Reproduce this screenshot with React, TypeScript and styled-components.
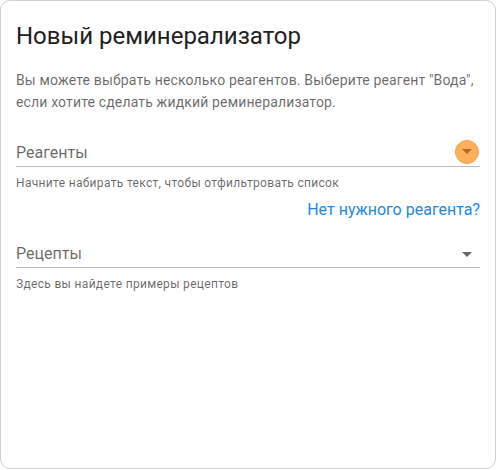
import styled, { createGlobalStyle } from "styled-components";

const GlobalStyle = createGlobalStyle`
  body {
    margin: 0;
    background: #fff;
    font-family: Roboto, "Noto Sans", Arial, sans-serif;
  }
`;

const Card = styled.div`
  box-sizing: border-box;
  width: 496px;
  height: 469px;
  border: 1px solid #cfcfcf;
  border-radius: 10px;
  padding: 21px 15px 16px;
  display: flex;
  flex-direction: column;
`;

const Title = styled.h2`
  margin: 0;
  font-size: 24px;
  font-weight: 400;
  line-height: 28px;
  color: #212121;
`;

const Intro = styled.p`
  margin: 19px 0 0;
  font-size: 14px;
  line-height: 22px;
  letter-spacing: 0.15px;
  color: rgba(0, 0, 0, 0.6);
`;

const Field = styled.div<{ $gap: number }>`
  margin-top: ${(p) => p.$gap}px;
  display: flex;
  flex-direction: column;
`;

const InputRow = styled.div`
  display: flex;
  align-items: center;
  justify-content: space-between;
  height: 24px;
  padding-bottom: 1px;
  border-bottom: 1px solid #bdbdbd;
`;

const Label = styled.span`
  font-size: 16px;
  line-height: 24px;
  color: rgba(0, 0, 0, 0.6);
`;

const ArrowButton = styled.span<{ $active?: boolean }>`
  box-sizing: border-box;
  width: 24px;
  height: 24px;
  margin-right: 1px;
  margin-top: ${(p) => (p.$active ? "-3px" : "0")};
  border-radius: 50%;
  display: flex;
  align-items: center;
  justify-content: center;
  background: ${(p) => (p.$active ? "#ffb05c" : "transparent")};
  border: ${(p) => (p.$active ? "1px solid #f7a145" : "none")};
  color: ${(p) => (p.$active ? "#b5682a" : "#666")};
`;

const Helper = styled.span`
  margin-top: 6px;
  font-size: 12px;
  line-height: 20px;
  letter-spacing: 0.32px;
  color: rgba(0, 0, 0, 0.6);
`;

const LinkRow = styled.div`
  margin-top: 5px;
  display: flex;
  justify-content: flex-end;
`;

const Link = styled.a`
  font-size: 16px;
  line-height: 24px;
  color: #1e88e5;
  text-decoration: none;
  cursor: pointer;
`;

const Caret = () => (
  <svg width="10" height="5" viewBox="0 0 10 5">
    <path d="M0 0 L10 0 L5 5 Z" fill="currentColor" />
  </svg>
);

const App = () => {
  return (
    <>
      <GlobalStyle />
      <Card>
        <Title>Новый реминерализатор</Title>
        <Intro>
          Вы можете выбрать несколько реагентов. Выберите реагент "Вода",
          если хотите сделать жидкий реминерализатор.
        </Intro>

        <Field $gap={28}>
          <InputRow>
            <Label>Реагенты</Label>
            <ArrowButton $active>
              <Caret />
            </ArrowButton>
          </InputRow>
          <Helper>Начните набирать текст, чтобы отфильтровать список</Helper>
        </Field>

        <LinkRow>
          <Link>Нет нужного реагента?</Link>
        </LinkRow>

        <Field $gap={20}>
          <InputRow>
            <Label>Рецепты</Label>
            <ArrowButton>
              <Caret />
            </ArrowButton>
          </InputRow>
          <Helper>Здесь вы найдете примеры рецептов</Helper>
        </Field>
      </Card>
    </>
  );
};

export default App;
